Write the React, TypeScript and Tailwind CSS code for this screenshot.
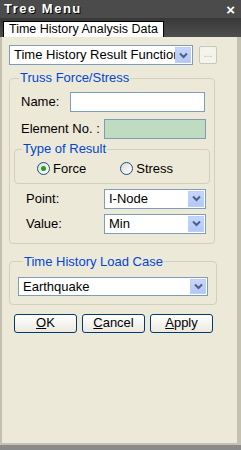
import React from "react";

const Chevron = () => (
  <svg width="9" height="7" viewBox="0 0 9 7">
    <path d="M1 1.5 L4.5 5 L8 1.5" fill="none" stroke="#4d6185" strokeWidth="2" />
  </svg>
);

const DropBtn = () => (
  <div className="w-[16px] h-full flex items-center justify-center bg-gradient-to-b from-[#c6d6fc] to-[#b4c8f6] border border-[#bccffa]">
    <Chevron />
  </div>
);

const Select = ({ value, w, h = "h-[20px]" }: { value: string; w: string; h?: string }) => (
  <div className={`${w} ${h} bg-white border border-[#7f9db9] flex items-stretch p-px`}>
    <div className="flex-1 overflow-hidden whitespace-nowrap text-[13px] leading-[16px] pl-[3px] text-black">{value}</div>
    <DropBtn />
  </div>
);

const U = ({ c }: { c: string }) => <span className="underline">{c}</span>;

const Btn = ({ first, rest }: { first: string; rest: string }) => (
  <div className="w-[63px] h-[19px] rounded-[3px] border border-[#003c74] bg-gradient-to-b from-white to-[#ece9e0] flex items-center justify-center text-[13px] text-black">
    <U c={first} />
    {rest}
  </div>
);

const Radio = ({ checked, label }: { checked?: boolean; label: string }) => (
  <div className="flex items-center gap-[3px]">
    <div className="w-[13px] h-[13px] rounded-full border border-[#1c5180] bg-gradient-to-br from-[#dcdcd6] to-white flex items-center justify-center">
      {checked && <div className="w-[5px] h-[5px] rounded-full bg-[#21a121]" />}
    </div>
    <span className="text-[13px] text-black">{label}</span>
  </div>
);

export default function App() {
  return (
    <div className="w-[241px] h-[450px] flex flex-col bg-[#8a8a8a] font-['Liberation_Sans',Arial,sans-serif]">
      <div className="h-[18px] bg-[#4b4b4b] flex items-center justify-between pl-[4px] pr-[6px]">
        <span className="text-white font-bold text-[13px] tracking-[1.5px] [text-shadow:1px_1px_0_#000]">Tree Menu</span>
        <span className="text-white font-bold text-[15px] leading-none">×</span>
      </div>
      <div className="h-[19px] bg-gradient-to-b from-[#383838] to-[#4e4e4e] flex items-end pl-[3px]">
        <div className="h-[16px] bg-white border border-b-0 border-black px-[5px] text-[12.5px] leading-[15px] text-black">
          Time History Analysis Data
        </div>
      </div>
      <div className="flex-1 mb-[5px] bg-[#ece9d8] border-l-[2px] border-r-[4px] border-b-[2px] border-[#c4c1b1] flex flex-col pl-[7px]">
        <div className="flex items-center mt-[8px] gap-[6px]">
          <Select value="Time History Result Function" w="w-[184px]" />
          <div className="w-[18px] h-[18px] rounded-[2px] border border-[#c9c7ba] bg-[#f5f4ea] text-[#aca899] text-[10px] leading-[14px] text-center">...</div>
        </div>

        <fieldset className="mt-[6px] w-[206px] border border-[#d0d0bf] rounded-[4px] px-[4px] pb-[9px]">
          <legend className="ml-[5px] px-[1px] text-[13px] leading-[14px] text-[#0046d5]">Truss Force/Stress</legend>
          <div className="flex items-center justify-between mt-[7px] pl-[7px] pr-[5px]">
            <span className="text-[13px] text-black">Name:</span>
            <div className="w-[135px] h-[20px] bg-white border border-[#7f9db9]" />
          </div>
          <div className="flex items-center justify-between mt-[7px] pl-[7px] pr-[4px]">
            <span className="text-[13px] text-black">Element No. :</span>
            <div className="w-[102px] h-[20px] bg-[#c0dcc0] border border-[#7f9db9]" />
          </div>
          <fieldset className="mt-[3px] w-[196px] border border-[#d0d0bf] rounded-[4px] pb-[4px]">
            <legend className="ml-[7px] px-[1px] text-[13px] leading-[14px] text-[#0046d5]">Type of Result</legend>
            <div className="flex items-center pl-[22px] gap-[34px] mt-[3px]">
              <Radio checked label="Force" />
              <Radio label="Stress" />
            </div>
          </fieldset>
          <div className="flex items-center justify-between mt-[5px] pl-[12px] pr-[4px]">
            <span className="text-[13px] text-black">Point:</span>
            <Select value="I-Node" w="w-[102px]" />
          </div>
          <div className="flex items-center justify-between mt-[5px] pl-[12px] pr-[4px]">
            <span className="text-[13px] text-black">Value:</span>
            <Select value="Min" w="w-[102px]" />
          </div>
        </fieldset>

        <fieldset className="mt-[11px] w-[206px] border border-[#d0d0bf] rounded-[4px] px-[8px] pb-[8px]">
          <legend className="ml-[5px] px-[1px] text-[13px] leading-[14px] text-[#0046d5]">Time History Load Case</legend>
          <div className="mt-[8px]">
            <Select value="Earthquake" w="w-[190px]" h="h-[19px]" />
          </div>
        </fieldset>

        <div className="flex gap-[5px] mt-[9px] pl-[5px]">
          <Btn first="O" rest="K" />
          <Btn first="C" rest="ancel" />
          <Btn first="A" rest="pply" />
        </div>
      </div>
    </div>
  );
}
